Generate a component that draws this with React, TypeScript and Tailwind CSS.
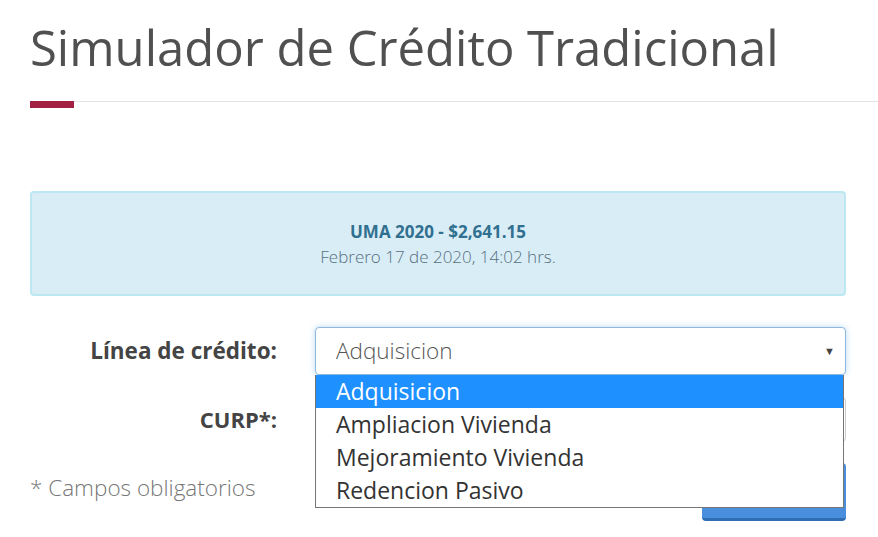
const options = ["Adquisicion", "Ampliacion Vivienda", "Mejoramiento Vivienda", "Redencion Pasivo"];

export default function App() {
  return (
    <div className="h-[537px] w-[878px] overflow-hidden bg-white font-['Open_Sans',sans-serif] text-[#444]">
      <div className="pl-[30px]">
        <h1 className="pt-[17px] text-[49px] leading-[60px] font-normal text-[#505050]">
          Simulador de Crédito Tradicional
        </h1>
        <div className="mt-[24px] h-px bg-[#e3e3e3]" />
        <div className="h-[7px] w-[44px] bg-[#a21f43] -mt-px" />
      </div>

      <div className="px-[30px] pr-[32px]">
        <div className="mt-[83px] flex h-[105px] flex-col items-center justify-center rounded border-2 border-[#bce8f1] bg-[#d9edf7] pt-[1px]">
          <p className="text-[17px] leading-[25px] font-bold text-[#31708f]">UMA 2020 - $2,641.15</p>
          <p className="text-[17px] leading-[25px] font-light text-[#56707e]">Febrero 17 de 2020, 14:02 hrs.</p>
        </div>

        <div className="mt-[31px] grid grid-cols-[247px_1fr] gap-x-[38px]">
          <label className="flex h-[48px] items-center justify-end text-[22.5px] font-bold text-[#444]">
            Línea de crédito:
          </label>
          <div className="relative z-10">
            <div className="flex h-[48px] items-center justify-between rounded border border-[#8fb8e0] bg-white pl-[20px] pr-[10px] shadow-[0_0_6px_rgba(102,175,233,0.45)]">
              <span className="text-[22.5px] font-light text-[#555]">Adquisicion</span>
              <span className="text-[11px] text-[#444]">▼</span>
            </div>
            <ul className="absolute left-0 right-[2px] top-[48px] border border-[#767676] border-t-0 bg-white">
              {options.map((o, i) => (
                <li
                  key={o}
                  className={
                    i === 0
                      ? "h-[33px] pl-[20px] text-[23px] leading-[33px] text-white bg-[#1e90ff]"
                      : "h-[33px] pl-[20px] text-[23px] leading-[33px] text-[#333]"
                  }
                >
                  {o}
                </li>
              ))}
            </ul>
          </div>

          <label className="mt-[22px] flex h-[45px] items-center justify-end text-[22px] font-bold text-[#444]">
            CURP*:
          </label>
          <div className="mt-[22px] h-[45px] rounded border border-[#ccc] bg-white" />
        </div>

        <div className="mt-[21px] flex items-start justify-between">
          <p className="mt-[8px] text-[22.5px] font-light text-[#777]">* Campos obligatorios</p>
          <button className="h-[58px] w-[144px] rounded border-b-[3px] border-[#2f6db5] bg-[#4a8fdd] text-white" />
        </div>
      </div>
    </div>
  );
}
